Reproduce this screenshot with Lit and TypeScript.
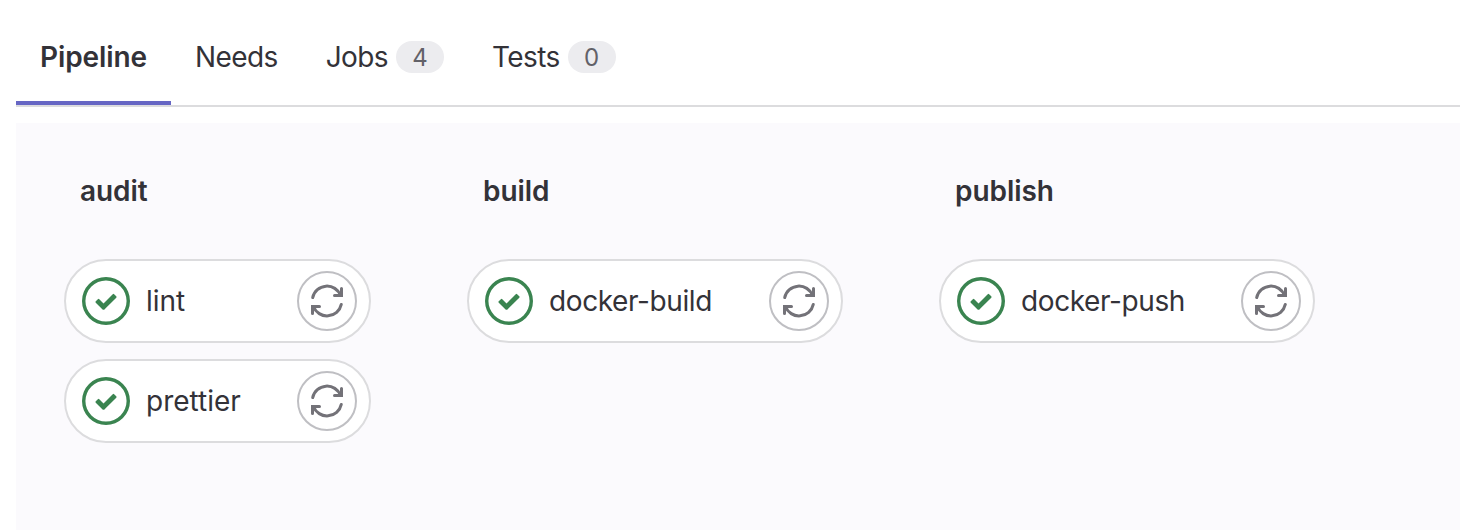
import { LitElement, html, css, svg } from "lit";
import { customElement, property } from "lit/decorators.js";

const successIcon = html`<svg viewBox="0 0 14 14" width="48" height="48" fill="#3a8450">
  <path fill-rule="evenodd" d="M0 7a7 7 0 1 1 14 0A7 7 0 0 1 0 7zm1 0a6 6 0 1 0 12 0A6 6 0 0 0 1 7z" />
  <path d="M6.278 7.697L5.045 6.464a.296.296 0 0 0-.42-.002l-.613.614a.298.298 0 0 0 .002.42l1.91 1.909a.5.5 0 0 0 .703.005l.265-.265L9.997 6.04a.291.291 0 0 0-.009-.408l-.614-.614a.29.29 0 0 0-.408-.009L6.278 7.697z" />
</svg>`;

const retryArrow = svg`<path d="M1.7 12.6A14.6 14.6 0 0 1 29.6 10.5" /><path d="M30.5 3.5V10.5H23.5" />`;

const retryIcon = html`<svg viewBox="0 0 32 32" width="32" height="32" fill="none" stroke="#737278"
  stroke-width="3" stroke-linecap="round" overflow="visible">
  <g>${retryArrow}</g>
  <g transform="rotate(180 16 16)">${retryArrow}</g>
</svg>`;

@customElement("job-pill")
export class JobPill extends LitElement {
  @property() name = "";

  static styles = css`
    :host {
      display: flex;
      align-items: center;
      box-sizing: border-box;
      height: 84px;
      padding: 0 12px 0 16px;
      border: 2px solid #dcdcde;
      border-radius: 42px;
      background: #fff;
    }
    svg { display: block; flex: none; }
    .name { flex: 1; margin-left: 16px; white-space: nowrap; }
    .compact { letter-spacing: -0.4px; }
    .retry {
      display: flex;
      align-items: center;
      justify-content: center;
      box-sizing: border-box;
      width: 60px;
      height: 60px;
      padding: 0;
      border: 2px solid #bfbfc3;
      border-radius: 50%;
      background: #fff;
    }
  `;

  render() {
    return html`${successIcon}<span class="name ${this.name.length > 8 ? "compact" : ""}">${this.name}</span>
      <button class="retry" aria-label="Retry">${retryIcon}</button>`;
  }
}

interface Tab { label: string; count?: number; active?: boolean }

const tabs: Tab[] = [
  { label: "Pipeline", active: true },
  { label: "Needs" },
  { label: "Jobs", count: 4 },
  { label: "Tests", count: 0 },
];

const stages = [
  { name: "audit", jobs: ["lint", "prettier"] },
  { name: "build", jobs: ["docker-build"] },
  { name: "publish", jobs: ["docker-push"] },
];

@customElement("app-root")
export class AppRoot extends LitElement {
  static styles = css`
    :host {
      display: flex;
      flex-direction: column;
      box-sizing: border-box;
      height: 530px;
      padding-left: 16px;
      overflow: hidden;
      background: #fff;
      color: #333238;
      font: 28px/40px Inter, sans-serif;
    }
    .tabs {
      display: flex;
      flex: none;
      box-sizing: border-box;
      height: 107px;
      border-bottom: 2px solid #dcdcde;
    }
    .tab {
      display: flex;
      align-items: flex-start;
      box-sizing: border-box;
      padding: 37px 24px 0;
      letter-spacing: -0.6px;
      white-space: nowrap;
    }
    .active {
      width: 155px;
      border-bottom: 4px solid #6666c4;
      font-weight: 600;
      letter-spacing: -0.1px;
    }
    .badge {
      box-sizing: border-box;
      width: 48px;
      height: 32px;
      margin: 4px 0 0 8px;
      border-radius: 16px;
      background: #ececef;
      color: #626168;
      font-size: 24px;
      line-height: 33px;
      letter-spacing: 0;
      text-align: center;
    }
    .graph {
      display: grid;
      grid-template-columns: 307px 376px 376px;
      column-gap: 96px;
      align-items: start;
      flex: 1;
      margin-top: 16px;
      padding: 48px 0 0 48px;
      background: #fbfafd;
    }
    .stage { display: flex; flex-direction: column; gap: 16px; }
    .title {
      margin: 0 0 32px;
      padding-left: 16px;
      font: inherit;
      font-weight: 600;
      letter-spacing: -0.05px;
    }
  `;

  render() {
    return html`
      <nav class="tabs">
        ${tabs.map((t) => html`<div class="tab ${t.active ? "active" : ""}">
          <span>${t.label}</span>${t.count === undefined ? "" : html`<span class="badge">${t.count}</span>`}
        </div>`)}
      </nav>
      <main class="graph">
        ${stages.map((s) => html`<section class="stage">
          <h2 class="title">${s.name}</h2>
          ${s.jobs.map((j) => html`<job-pill .name=${j}></job-pill>`)}
        </section>`)}
      </main>
    `;
  }
}
